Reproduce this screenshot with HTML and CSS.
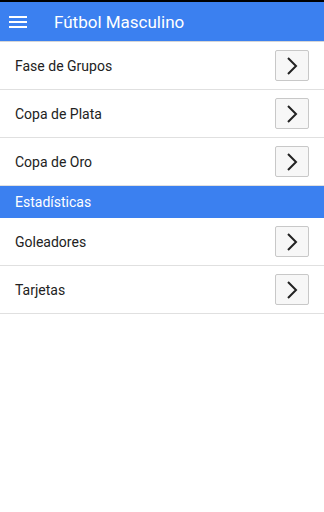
FILE: index.html
```html
<!DOCTYPE html>
<html lang="es">
<head>
    <meta charset="UTF-8">
    <meta name="viewport" content="width=device-width, initial-scale=1.0">
    <title>Fútbol Masculino</title>
    <link rel="stylesheet" href="styles.css">
</head>
<body>
    <div class="statusbar"></div>
    <header class="topbar">
        <span class="menu-icon">
            <svg width="18" height="14" viewBox="0 0 18 14">
                <rect x="0" y="1" width="18" height="2" fill="#fff"/>
                <rect x="0" y="6" width="18" height="2" fill="#fff"/>
                <rect x="0" y="11" width="18" height="2" fill="#fff"/>
            </svg>
        </span>
        <h1>Fútbol Masculino</h1>
    </header>

    <ul class="list">
        <li class="item">Fase de Grupos <button class="go"><svg width="12" height="20" viewBox="0 0 12 20"><path d="M2 2 L10 10 L2 18" fill="none" stroke="#222" stroke-width="2"/></svg></button></li>
        <li class="item">Copa de Plata <button class="go"><svg width="12" height="20" viewBox="0 0 12 20"><path d="M2 2 L10 10 L2 18" fill="none" stroke="#222" stroke-width="2"/></svg></button></li>
        <li class="item">Copa de Oro <button class="go"><svg width="12" height="20" viewBox="0 0 12 20"><path d="M2 2 L10 10 L2 18" fill="none" stroke="#222" stroke-width="2"/></svg></button></li>
        <li class="section">Estadísticas</li>
        <li class="item">Goleadores <button class="go"><svg width="12" height="20" viewBox="0 0 12 20"><path d="M2 2 L10 10 L2 18" fill="none" stroke="#222" stroke-width="2"/></svg></button></li>
        <li class="item">Tarjetas <button class="go"><svg width="12" height="20" viewBox="0 0 12 20"><path d="M2 2 L10 10 L2 18" fill="none" stroke="#222" stroke-width="2"/></svg></button></li>
    </ul>
</body>
</html>
```

FILE: styles.css
```css
body {
    margin: 0;
    font-family: Roboto, "Liberation Sans", sans-serif;
    background: #fff;
}

.statusbar {
    height: 2px;
    background: #000;
}

.topbar {
    height: 39px;
    background: #3b80f0;
    border-bottom: 1px solid #d6d6d6;
    display: flex;
    align-items: center;
    padding-left: 9px;
}

.menu-icon {
    display: flex;
    width: 18px;
    height: 14px;
}

.topbar h1 {
    margin: 0 0 0 27px;
    font-size: 17px;
    font-weight: normal;
    color: #fff;
}

.list {
    list-style: none;
    margin: 0;
    padding: 0;
}

.item {
    height: 47px;
    border-bottom: 1px solid #e0e0e0;
    display: flex;
    align-items: center;
    justify-content: space-between;
    padding: 0 15px;
    font-size: 14px;
    color: #222;
}

.go {
    width: 34px;
    height: 31px;
    margin: 0;
    padding: 0;
    background: #f7f7f7;
    border: 1px solid #c8c8c8;
    border-radius: 2px;
    display: flex;
    align-items: center;
    justify-content: center;
}

.section {
    height: 32px;
    background: #3b80f0;
    color: #fff;
    font-size: 14px;
    display: flex;
    align-items: center;
    padding: 0 15px;
}
```
